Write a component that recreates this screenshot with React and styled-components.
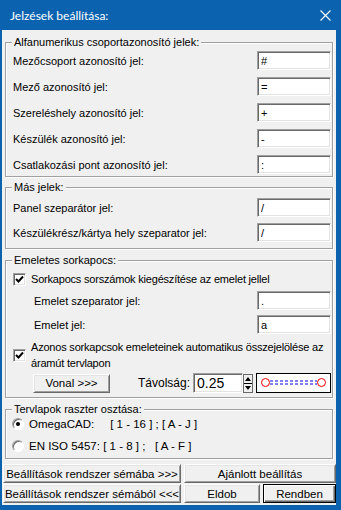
import React from 'react';
import styled, { createGlobalStyle } from 'styled-components';

const GlobalStyle = createGlobalStyle`
  html, body {
    margin: 0;
    padding: 0;
    background: #fff;
  }
  body {
    font-family: "Liberation Sans", Arial, sans-serif;
    font-size: 11px;
    color: #000;
  }
`;

const Window = styled.div`
  width: 341px;
  height: 510px;
  box-sizing: border-box;
  background: #0b63b0;
  padding: 0 5px 5px 2px;
  display: flex;
  flex-direction: column;
`;

const TitleBar = styled.div`
  height: 30px;
  flex: none;
  display: flex;
  align-items: center;
  justify-content: space-between;
  padding: 0 5px 0 8px;
  color: #fff;
  font-family: Lato, "Liberation Sans", sans-serif;
  font-size: 12px;
`;

const Body = styled.div`
  flex: 1;
  min-height: 0;
  background: #f0f0f0;
  padding: 12px 3px 3px 3px;
  display: flex;
  flex-direction: column;
`;

const Group = styled.div`
  position: relative;
  border: 1px solid #a0a0a0;
  box-shadow: inset 1px 1px #fff, 1px 1px #fff;
  padding: ${p => p.$pad};
  margin-top: ${p => p.$mt || 0}px;
  display: flex;
  flex-direction: column;
`;

const Caption = styled.div`
  position: absolute;
  top: -7px;
  left: 6px;
  padding: 0 2px;
  background: #f0f0f0;
  line-height: 13px;
`;

const Row = styled.div`
  display: flex;
  align-items: center;
  justify-content: space-between;
  height: 19px;
  margin-top: ${p => p.$mt || 0}px;
  padding-left: ${p => p.$indent || 0}px;
`;

const Label = styled.span`
  white-space: nowrap;
  font-size: ${p => p.$fs || 11}px;
  margin-right: ${p => p.$mr || 0}px;
`;

const Field = styled.input`
  width: ${p => p.$w || 74}px;
  height: ${p => p.$h || 19}px;
  box-sizing: border-box;
  margin: 0;
  padding: 0 0 0 3px;
  border: 1px solid;
  border-color: #a0a0a0 #fff #fff #a0a0a0;
  box-shadow: inset 1px 1px #696969, inset -1px -1px #e3e3e3;
  background: #fff;
  font-family: "Liberation Sans", Arial, sans-serif;
  font-size: ${p => p.$fs || 11}px;
  color: #000;
  outline: none;
`;

const CheckRow = styled.div`
  display: flex;
  align-items: center;
  gap: 5px;
  margin-top: ${p => p.$mt || 0}px;
  line-height: 16px;
  white-space: nowrap;
  letter-spacing: -0.2px;
`;

const CheckBox = styled.span`
  flex: none;
  width: 13px;
  height: 13px;
  box-sizing: border-box;
  border: 1px solid;
  border-color: #a0a0a0 #fff #fff #a0a0a0;
  box-shadow: inset 1px 1px #696969, inset -1px -1px #e3e3e3;
  background: #fff;
  display: flex;
  align-items: center;
  justify-content: center;
`;

const Radio = styled.span`
  flex: none;
  width: 12px;
  height: 12px;
  box-sizing: border-box;
  border-radius: 50%;
  border: 1px solid;
  border-color: #a0a0a0 #fff #fff #a0a0a0;
  box-shadow: inset 1px 1px #696969;
  background: #fff;
  display: flex;
  align-items: center;
  justify-content: center;

  &::after {
    content: '';
    display: ${p => (p.$on ? 'block' : 'none')};
    width: 4px;
    height: 4px;
    border-radius: 50%;
    background: #000;
  }
`;

const RadioRow = styled.div`
  display: flex;
  align-items: center;
  gap: 5px;
  height: 16px;
  margin-top: ${p => p.$mt || 0}px;
  white-space: pre;
  font-size: 11.5px;
`;

const Button = styled.div`
  width: ${p => p.$w}px;
  height: 19px;
  box-sizing: border-box;
  flex: none;
  display: flex;
  align-items: center;
  justify-content: center;
  background: #f0f0f0;
  border: 1px solid;
  border-color: ${p => (p.$default ? '#000' : '#fff #696969 #696969 #fff')};
  box-shadow: ${p =>
    p.$default
      ? 'inset 1px 1px #fff, inset -1px -1px #696969, inset -2px -2px #a0a0a0'
      : 'inset 1px 1px #e3e3e3, inset -1px -1px #a0a0a0'};
  font-size: 11.5px;
  white-space: nowrap;
`;

const ButtonBar = styled.div`
  margin: 5px -1px 0 -2px;
  display: flex;
  flex-direction: column;
  gap: 1px;
`;

const ButtonRow = styled.div`
  display: flex;
  gap: 3px;
`;

const BottomRow = styled.div`
  display: flex;
  align-items: center;
  justify-content: space-between;
  margin-top: 2px;
  padding-left: 20px;
`;

const SpinGroup = styled.div`
  display: flex;
  align-items: center;
`;

const Spinner = styled.div`
  width: 10px;
  height: 19px;
  margin-right: 3px;
  display: flex;
  flex-direction: column;
  background: #000;
  gap: 1px;
  box-sizing: border-box;
  border: 1px solid #696969;
`;

const SpinHalf = styled.div`
  flex: 1;
  background: #f0f0f0;
  display: flex;
  align-items: center;
  justify-content: center;
`;

const Preview = styled.div`
  width: 75px;
  height: 20px;
  box-sizing: border-box;
  border: 1px solid #000;
  background: #fff;
`;

const Check = () => (
  <svg width="9" height="9" viewBox="0 0 9 9">
    <path d="M1 4 L3.5 6.5 L8 1.5" stroke="#000" strokeWidth="2" fill="none" />
  </svg>
);

const Tri = ({ up }) => (
  <svg width="6" height="4" viewBox="0 0 6 4">
    <path d={up ? 'M0 4 L3 0 L6 4 Z' : 'M0 0 L3 4 L6 0 Z'} fill="#000" />
  </svg>
);

const fieldsA = [
  ['Mezőcsoport azonosító jel:', '#'],
  ['Mező azonosító jel:', '='],
  ['Szereléshely azonosító jel:', '+'],
  ['Készülék azonosító jel:', '-'],
  ['Csatlakozási pont azonosító jel:', ':'],
];

export default function App() {
  return (
    <>
      <GlobalStyle />
      <Window>
        <TitleBar>
          <span>Jelzések beállítása:</span>
          <svg width="11" height="11" viewBox="0 0 11 11">
            <path d="M0.5 0.5 L10.5 10.5 M10.5 0.5 L0.5 10.5" stroke="#fff" strokeWidth="1.1" />
          </svg>
        </TitleBar>
        <Body>
          <Group $pad="8px 1px 2px 7px">
            <Caption>Alfanumerikus csoportazonosító jelek:</Caption>
            {fieldsA.map(([label, value], i) => (
              <Row key={label} $mt={i ? 7 : 0}>
                <Label>{label}</Label>
                <Field readOnly defaultValue={value} />
              </Row>
            ))}
          </Group>

          <Group $mt={10} $pad="10px 1px 6px 7px">
            <Caption>Más jelek:</Caption>
            <Row>
              <Label>Panel szeparátor jel:</Label>
              <Field readOnly defaultValue="/" />
            </Row>
            <Row $mt={6}>
              <Label>Készülékrész/kártya hely szeparator jel:</Label>
              <Field readOnly defaultValue="/" />
            </Row>
          </Group>

          <Group $mt={11} $pad="10px 1px 4px 7px">
            <Caption>Emeletes sorkapocs:</Caption>
            <CheckRow>
              <CheckBox><Check /></CheckBox>
              <span>Sorkapocs sorszámok kiegészítése az emelet jellel</span>
            </CheckRow>
            <Row $mt={4} $indent={21}>
              <Label>Emelet szeparator jel:</Label>
              <Field readOnly defaultValue="." />
            </Row>
            <Row $mt={5} $indent={21}>
              <Label>Emelet jel:</Label>
              <Field readOnly defaultValue="a" />
            </Row>
            <CheckRow $mt={5}>
              <CheckBox><Check /></CheckBox>
              <span>
                Azonos sorkapcsok emeleteinek automatikus összejelölése az
                <br />
                áramút tervlapon
              </span>
            </CheckRow>
            <BottomRow>
              <Button $w={77}>Vonal &gt;&gt;&gt;</Button>
              <SpinGroup>
                <Label $fs={12} $mr={3}>Távolság:</Label>
                <Field readOnly defaultValue="0.25" $w={50} $h={20} $fs={14} />
                <Spinner>
                  <SpinHalf><Tri up /></SpinHalf>
                  <SpinHalf><Tri /></SpinHalf>
                </Spinner>
                <Preview>
                  <svg width="73" height="18" viewBox="0 0 73 18">
                    <circle cx="8.5" cy="8.5" r="4" stroke="#e00" strokeWidth="1" fill="none" />
                    <circle cx="64.5" cy="8.5" r="4" stroke="#e00" strokeWidth="1" fill="none" />
                    <path d="M13 7 H60 M13 10 H60" stroke="#0000e0" strokeWidth="1" strokeDasharray="3 2" />
                  </svg>
                </Preview>
              </SpinGroup>
            </BottomRow>
          </Group>

          <Group $mt={11} $pad="6px 1px 4px 6px">
            <Caption>Tervlapok raszter osztása:</Caption>
            <RadioRow>
              <Radio $on />
              <span>OmegaCAD:     [ 1 - 16 ] ; [ A - J ]</span>
            </RadioRow>
            <RadioRow $mt={6}>
              <Radio />
              <span>EN ISO 5457: [ 1 - 8 ] ;   [ A - F ]</span>
            </RadioRow>
          </Group>

          <ButtonBar>
            <ButtonRow>
              <Button $w={178}>Beállítások rendszer sémába &gt;&gt;&gt;</Button>
              <Button $w={152}>Ajánlott beállítás</Button>
            </ButtonRow>
            <ButtonRow>
              <Button $w={178}>Beállítások rendszer sémából &lt;&lt;&lt;</Button>
              <Button $w={76}>Eldob</Button>
              <Button $w={73} $default>Rendben</Button>
            </ButtonRow>
          </ButtonBar>
        </Body>
      </Window>
    </>
  );
}
